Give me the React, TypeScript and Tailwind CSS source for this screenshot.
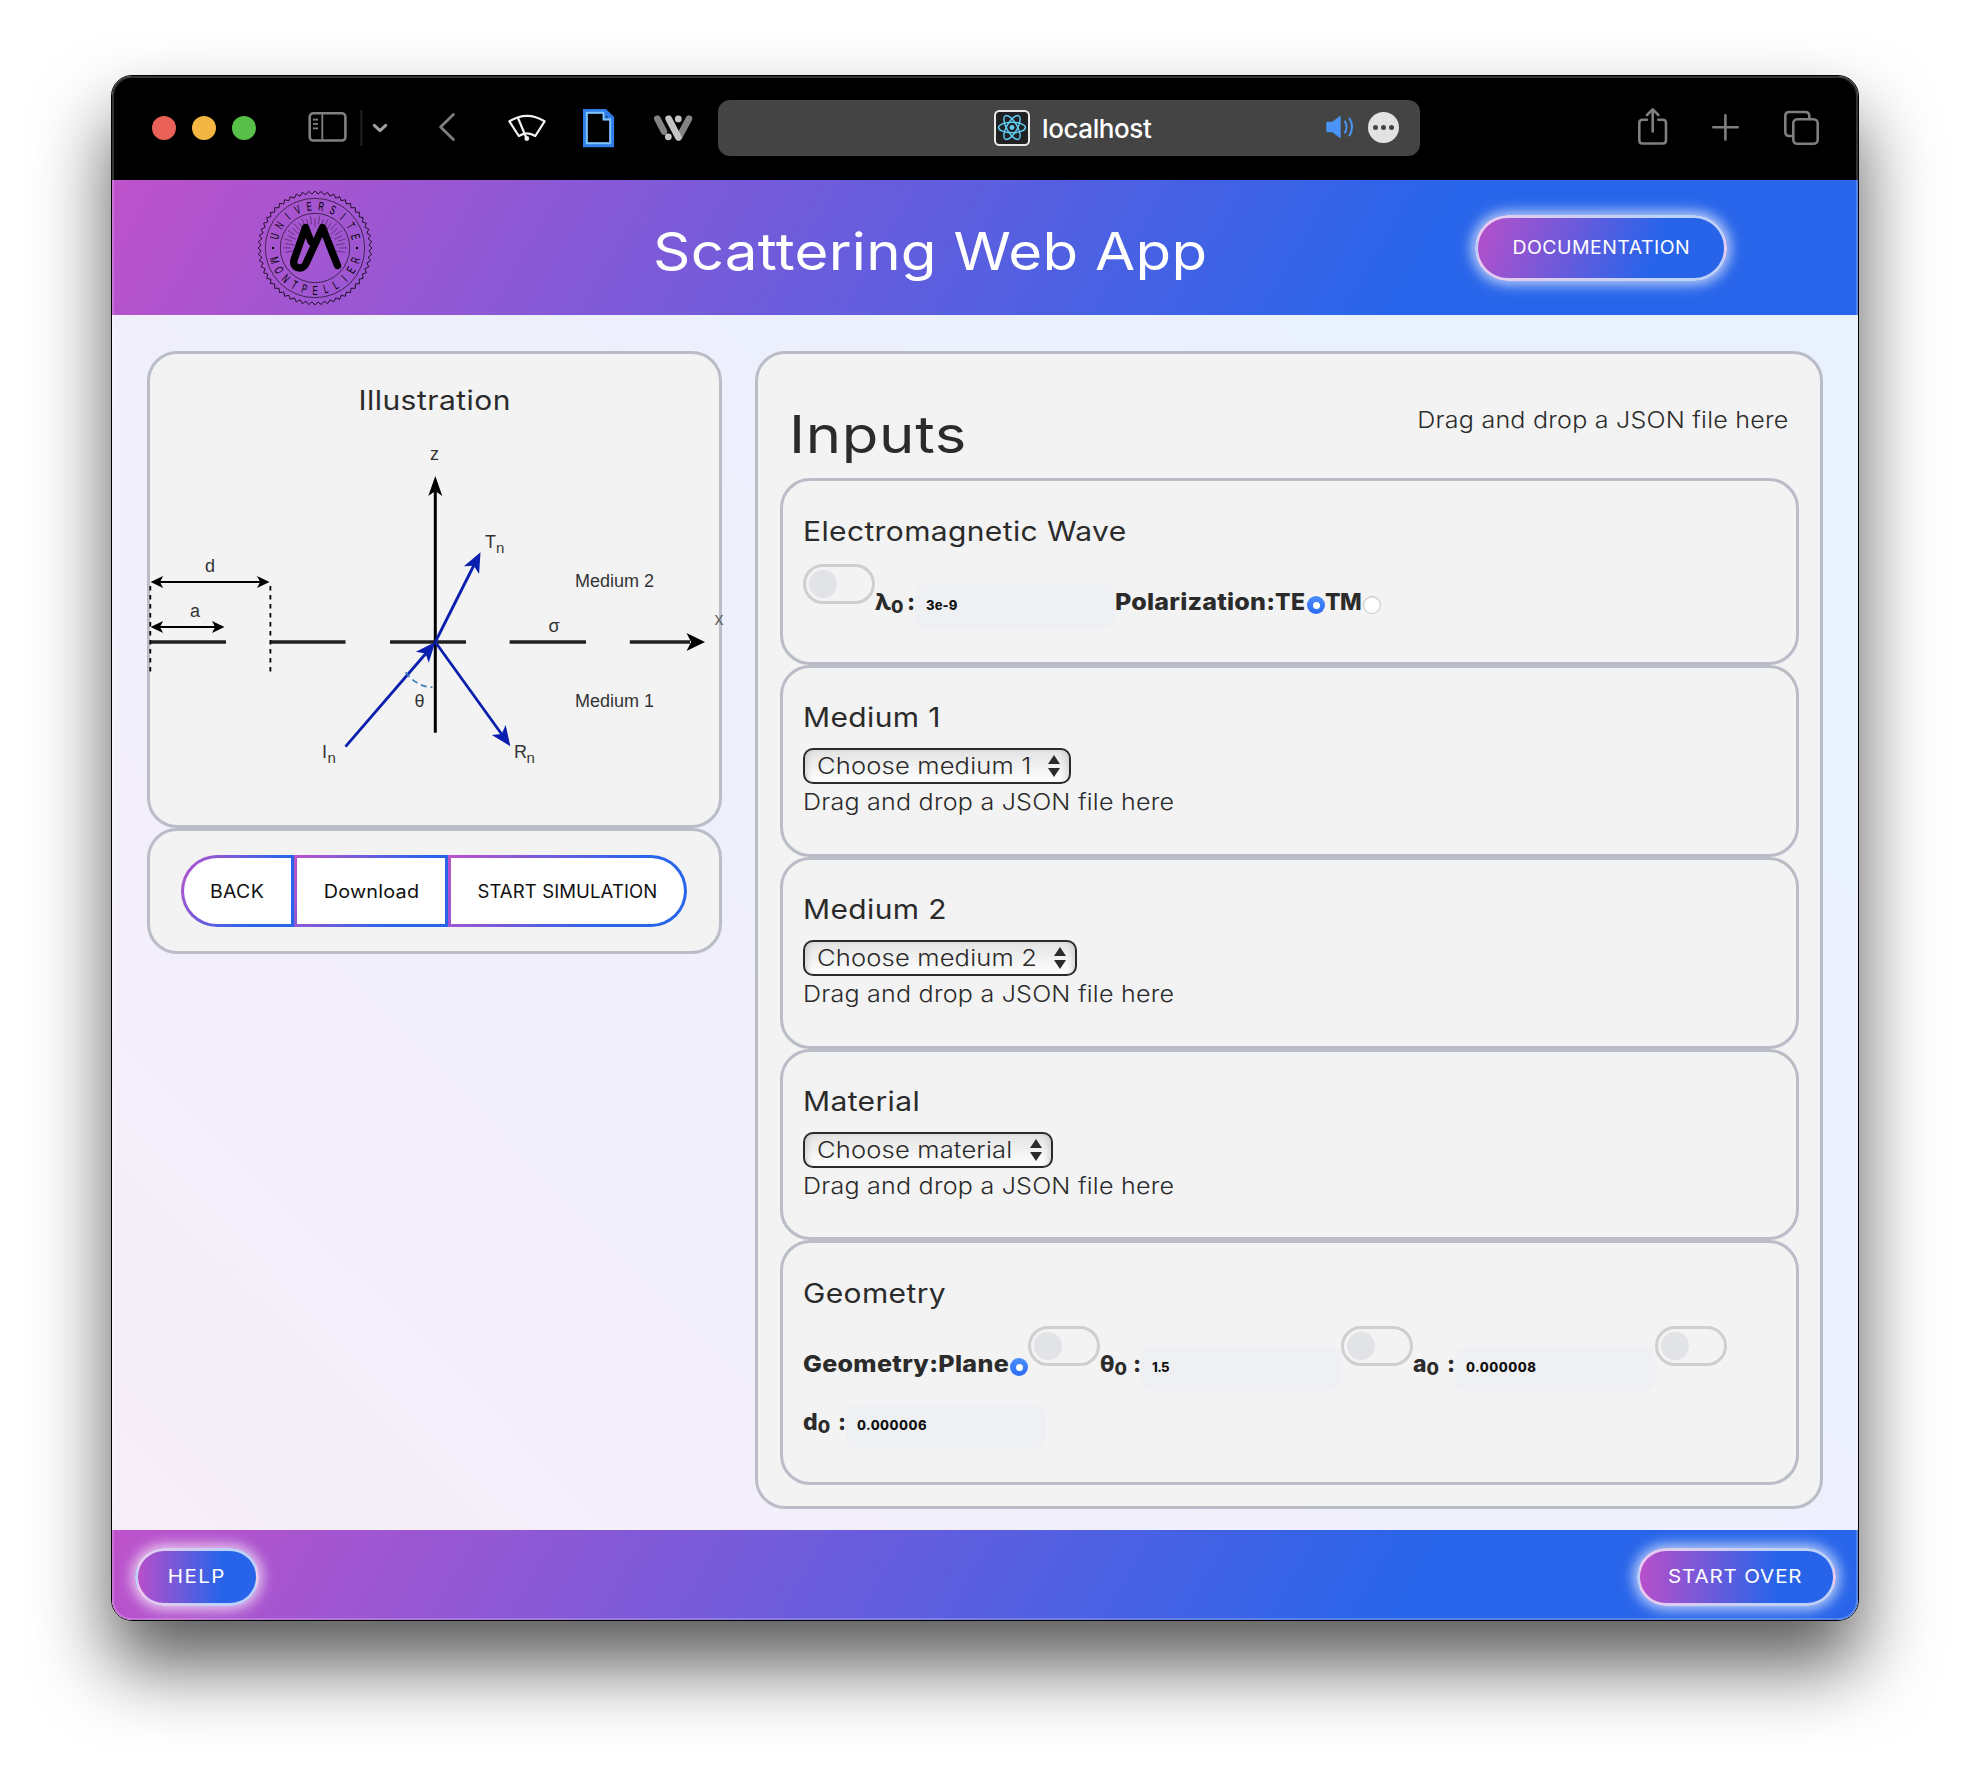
import type { ReactNode } from "react";

function Toggle() {
  return (
    <span className="flex h-[40px] w-[72px] shrink-0 items-center rounded-full border-[3px] border-[#cfcfcf] pl-[3px]">
      <span className="size-[28px] rounded-full bg-[#e2e3e7]" />
    </span>
  );
}

function Radio({ on }: { on?: boolean }) {
  return on ? (
    <span className="mt-[32px] flex size-[18px] shrink-0 items-center justify-center rounded-full bg-gradient-to-b from-[#4b8dfb] to-[#2c6bf5]">
      <span className="size-[7px] rounded-full bg-white" />
    </span>
  ) : (
    <span className="mt-[32px] size-[18px] shrink-0 rounded-full border border-[#c9c9c9] bg-white shadow-[inset_0_1px_1px_rgba(0,0,0,0.12)]" />
  );
}

function Field({ value, track }: { value: string; track: string }) {
  return (
    <span className={`mt-[20px] h-[45px] w-[200px] shrink-0 rounded-[12px] bg-[#eff0f3] pl-[11px] text-[13px] leading-[42px] font-extrabold text-[#111] ${track}`}>
      {value}
    </span>
  );
}

function Sym({ s, w }: { s: string; w: string }) {
  return (
    <span className={`flex shrink-0 pt-[16px] text-[23px] leading-[45px] font-extrabold ${w}`}>
      {s}
      <span className="pt-[4px] text-[18px]">0</span>
      <span className="ml-auto">:</span>
    </span>
  );
}

function Card({ title, className, children }: { title: string; className: string; children: ReactNode }) {
  return (
    <section className={`rounded-[30px] border-[3px] border-[#babdc8] bg-[#f3f3f3] pl-[20px] ${className}`}>
      <h2 className="text-[27px] leading-[34px]">
        <span className="inline-block origin-left scale-x-[1.11] tracking-[0.35px]">{title}</span>
      </h2>
      {children}
    </section>
  );
}

function Choice({ label, width }: { label: string; width: string }) {
  return (
    <>
      <div className={`mt-[13px] flex h-[36px] items-center justify-between rounded-[10px] border-2 border-[#2b2b2b] bg-gradient-to-b from-[#e3e3e3] to-white pr-[9px] pl-[12px] text-[23px] font-light shadow-[inset_6px_0_6px_-4px_rgba(0,0,0,0.14),inset_-6px_0_6px_-4px_rgba(0,0,0,0.14)] ${width}`}>
        <span className="inline-block origin-left scale-x-[1.11] tracking-[0.15px]">{label}</span>
        <svg width="12" height="22" viewBox="0 0 12 22" fill="#2b2b2b">
          <path d="M6 0 12 9H0zM6 22 0 13h12z" />
        </svg>
      </div>
      <p className="pt-px text-[23px] leading-[35px] font-light">
        <span className="inline-block origin-left scale-x-[1.09] tracking-[0.2px]">Drag and drop a JSON file here</span>
      </p>
    </>
  );
}

function polar(r: number, deg: number) {
  const a = (deg * Math.PI) / 180;
  return [r * Math.cos(a), r * Math.sin(a)];
}

function Seal() {
  const top = "UNIVERSITE".split("");
  const bottom = "MONTPELLIER".split("");
  const teeth = 56;
  const edge = Array.from({ length: teeth * 2 }, (_, i) => polar(i % 2 ? 54 : 57, (i * 180) / teeth).map((n) => n.toFixed(2)).join(",")).join(" ");
  return (
    <svg className="size-[116px]" viewBox="-58 -58 116 116" fill="none" stroke="#000">
      <polygon points={edge} strokeWidth="0.8" strokeLinejoin="round" />
      <circle r="49.7" strokeWidth="0.6" />
      <circle r="34.7" strokeWidth="0.6" />
      {Array.from({ length: 25 }, (_, i) => {
        const d = 172 + i * 8.17;
        const [x1, y1] = polar(i % 2 ? 24 : 21, d);
        const [x2, y2] = polar(i % 2 ? 32 : 30, d);
        return <line key={i} x1={x1} y1={y1} x2={x2} y2={y2} strokeWidth="0.4" />;
      })}
      <g fill="#000" stroke="none" fontFamily="Liberation Sans" fontSize="12.5" textAnchor="middle">
        {top.map((c, i) => (
          <text key={i} transform={`rotate(${-74 + i * 16.5}) translate(0 -37.8) scale(0.62 1)`}>{c}</text>
        ))}
        {bottom.map((c, i) => (
          <text key={i} transform={`rotate(${73 - i * 14.6}) translate(0 46.5) scale(0.62 1)`}>{c}</text>
        ))}
        <circle cx="-42" cy="0" r="1.2" />
        <circle cx="42" cy="0" r="1.2" />
      </g>
      <path d="M-3.8-6-9.5-20.5-21 12C-23.5 20-12 23.5-9 15.5L7.5-20.5 22.5 17.5" strokeWidth="7.4" strokeLinecap="round" strokeLinejoin="round" />
    </svg>
  );
}

type HeadProps = { x: number; y: number; deg: number; len?: number; half?: number; color?: string };

function Head({ x, y, deg, len = 18, half = 8, color = "#000" }: HeadProps) {
  return <path transform={`translate(${x} ${y}) rotate(${deg})`} d={`M0 0L${-len} ${-half}L${-len * 0.75} 0L${-len} ${half}Z`} fill={color} stroke="none" />;
}

function Diagram() {
  const blue = "#0b1fae";
  return (
    <svg className="h-[408px] w-[569px] overflow-visible" viewBox="150 417 569 408" fill="none">
      <path d="M150 642h76M270 642h75.5M390 642h76M509.6 642h76.4M629.8 642H690" stroke="#222" strokeWidth="3.6" />
      <path d="M435.3 488V732.7" stroke="#000" strokeWidth="3" />
      <Head x={435.3} y={476} deg={-90} len={20} half={7} />
      <Head x={705} y={642} deg={0} len={18.5} half={9} />
      <g stroke="#000" strokeWidth="1.8">
        <path d="M160 582h100M160 627h56" />
        <path d="M150.3 586V673M270.4 586V673" strokeDasharray="4.5 4.5" />
      </g>
      <Head x={150.6} y={582} deg={180} len={12.5} half={6} />
      <Head x={269.5} y={582} deg={0} len={12.5} half={6} />
      <Head x={150.6} y={627} deg={180} len={12.5} half={6} />
      <Head x={224.5} y={627} deg={0} len={12.5} half={6} />
      <path d="M345.5 746.7 428 651M435.3 642 474 565M435.3 642 503 736" stroke={blue} strokeWidth="2.8" />
      <Head x={480.5} y={552.3} deg={-63.3} len={20} half={8.5} color={blue} />
      <Head x={435.3} y={642} deg={-49.4} len={20} half={8.5} color={blue} />
      <Head x={510.4} y={746.3} deg={54.3} len={20} half={8.5} color={blue} />
      <path d="M405.6 672.3Q416 686.5 432.5 687.3" stroke="#3f7cb8" strokeWidth="1.8" strokeDasharray="6 4" />
      <g fill="#333" fontFamily="Liberation Sans" fontSize="18">
        <text x="430" y="459.5">z</text>
        <text x="205" y="572">d</text>
        <text x="190" y="617">a</text>
        <text x="485" y="548">T</text>
        <text x="496" y="552.5" fontSize="15">n</text>
        <text x="575" y="587">Medium 2</text>
        <text x="575" y="707">Medium 1</text>
        <text x="548.5" y="632">σ</text>
        <text x="414.4" y="707">θ</text>
        <text x="714.5" y="624.5" fill="#666">x</text>
        <text x="322" y="758">I</text>
        <text x="327.5" y="762.7" fontSize="15">n</text>
        <text x="514" y="758">R</text>
        <text x="526.5" y="762.7" fontSize="15">n</text>
      </g>
    </svg>
  );
}

function Toolbar() {
  return (
    <div className="flex h-[104px] items-center bg-black">
      <div className="ml-[40px] flex gap-[16px]">
        <span className="size-[24px] rounded-full bg-[#ea6157]" />
        <span className="size-[24px] rounded-full bg-[#f3b643]" />
        <span className="size-[24px] rounded-full bg-[#58bf49]" />
      </div>
      <svg className="ml-[52px] h-[40px] w-[80px]" viewBox="308 108 80 40" fill="none" stroke="#808080" strokeWidth="2.6">
        <rect x="309.7" y="113.3" width="35.7" height="27.2" rx="3.5" />
        <path d="M322.3 113v28M313 119.7h5M313 123.9h5M313 128.3h5" strokeWidth="1.8" />
        <path d="M361.3 110v36" stroke="#1f1f1f" strokeWidth="2" />
        <path d="M374.3 125.3 380 130.6 385.7 125.3" stroke="#a2a2a2" strokeWidth="3" strokeLinecap="round" strokeLinejoin="round" />
      </svg>
      <svg className="ml-[50px] h-[40px] w-[20px]" viewBox="438 108 20 40" fill="none" stroke="#7d7d7d" strokeWidth="2.8" strokeLinecap="round" strokeLinejoin="round">
        <path d="M453.4 114.4 440.6 127 453.4 139.6" />
      </svg>
      <svg className="ml-[50px] h-[40px] w-[38px]" viewBox="508 108 38 40" fill="none" stroke="#f2f2f2" strokeWidth="2.2" strokeLinejoin="round" strokeLinecap="round">
        <path d="M509.4 121.3Q527 110.5 544.6 121.3L535.3 136Q527 130.6 518.8 136ZM518 118 526.6 138.5" />
        <circle cx="526.8" cy="138.5" r="1.3" fill="#f2f2f2" />
      </svg>
      <svg className="ml-[36px] h-[40px] w-[34px]" viewBox="582 108 34 40" fill="none">
        <path d="M585.3 111.2H605L611.8 118V144.9H585.3Z" stroke="#2f7de6" strokeWidth="4.6" />
        <path d="M604.5 110.5V118.8H612.5" stroke="#2f7de6" strokeWidth="3" />
        <path d="M586.8 112.8H603.5V119.5H610.2V143.3H586.8Z" stroke="#82c4fc" strokeWidth="1.9" />
      </svg>
      <svg className="ml-[38px] h-[40px] w-[40px]" viewBox="654 108 40 40" fill="none" strokeLinecap="round" strokeWidth="6.6">
        <path d="M657.3 118.6 664 131.5" stroke="#838383" />
        <path d="M689 118.6 679 137.2" stroke="#838383" />
        <path d="M668.6 118.6 678.3 137.2" stroke="#c4c4c4" />
        <circle cx="678.3" cy="118.9" r="3.4" fill="#c4c4c4" />
        <circle cx="668.3" cy="136.8" r="3.4" fill="#c4c4c4" />
      </svg>
      <div className="ml-[24px] flex h-[56px] w-[702px] items-center rounded-[12px] bg-[#444]">
        <svg className="ml-[276px] size-[36px] shrink-0" viewBox="0 0 36 36" fill="none" stroke="#63cdf5" strokeWidth="1.4">
          <rect x="1" y="1" width="34" height="34" rx="4.5" fill="#1f2123" stroke="#e8e8e8" strokeWidth="2" />
          <ellipse cx="18" cy="17.5" rx="13.5" ry="5.2" />
          <ellipse cx="18" cy="17.5" rx="13.5" ry="5.2" transform="rotate(60 18 17.5)" />
          <ellipse cx="18" cy="17.5" rx="13.5" ry="5.2" transform="rotate(120 18 17.5)" />
          <circle cx="18" cy="17.5" r="2.4" fill="#63cdf5" stroke="none" />
        </svg>
        <span className="ml-[12px] text-[26px] font-medium tracking-[-0.4px] text-white">localhost</span>
        <svg className="mr-[14px] mb-[2px] ml-auto h-[24px] w-[28px]" viewBox="1325 115 28 24" fill="none" stroke="#4a94f7" strokeWidth="2" strokeLinecap="round">
          <path d="M1326 122.5H1331.5L1339 116.8V137.2L1331.5 131.5H1326Z" fill="#4a94f7" strokeLinejoin="round" strokeWidth="1.4" />
          <path d="M1344 121.5Q1347 127 1344 132.5M1348.5 118.5Q1353.5 127 1348.5 135.5" />
        </svg>
        <span className="mr-[21px] mb-[2px] flex size-[31px] items-center justify-center gap-[3px] rounded-full bg-[#e2e2e2]">
          <span className="size-[5px] rounded-full bg-[#444]" />
          <span className="size-[5px] rounded-full bg-[#444]" />
          <span className="size-[5px] rounded-full bg-[#444]" />
        </span>
      </div>
      <svg className="mr-[37px] ml-auto h-[42px] w-[184px]" viewBox="1637 106 184 42" fill="none" stroke="#7f7f7f" strokeWidth="2.6" strokeLinecap="round" strokeLinejoin="round">
        <path d="M1647 118.8H1642.5Q1639.3 118.8 1639.3 122V139.3Q1639.3 142.5 1642.5 142.5H1662.8Q1666 142.5 1666 139.3V122Q1666 118.8 1662.8 118.8H1658.3M1652.7 130.5V108.5M1647 114 1652.7 108.3 1658.4 114" />
        <path d="M1713.3 126.3H1737.7M1725.4 114.2V138.6" />
        <rect x="1793.3" y="118.3" width="24.4" height="24.4" rx="4" />
        <path d="M1793 135H1789.3Q1785.3 135 1785.3 131V115Q1785.3 111 1789.3 111H1805.3Q1809.3 111 1809.3 115V118" />
      </svg>
    </div>
  );
}

const glow =
  "flex items-center justify-center rounded-full border-[3px] border-white/70 text-white shadow-[0_0_14px_3px_rgba(255,255,255,0.75)]";
const band = "bg-[linear-gradient(120deg,#be52cb,#2865ea_74%)]";
const outline =
  "h-[72px] border-[3px] border-transparent [background:linear-gradient(#fff,#fff)_padding-box,linear-gradient(120deg,#be52cb,#2865ea_70%)_border-box]";
const panel = "rounded-[30px] border-[3px] border-[#babdc8] bg-[#f3f3f3]";
const bold = "pt-[16px] leading-[45px]";

export default function App() {
  return (
    <div className="h-[1768px] w-[1970px] bg-white pt-[75px] pl-[111px] font-['Inter',sans-serif] text-[#2b2b2b]">
      <div className="relative h-[1546px] w-[1748px] rounded-[21px] border border-black shadow-[0_44px_76px_rgba(0,0,0,0.65)]">
        <div className="flex h-full flex-col overflow-hidden rounded-[20px]">
          <Toolbar />
          <header className={`flex h-[135px] items-center ${band}`}>
            <div className="ml-[145px]">
              <Seal />
            </div>
            <h1 className="ml-[280px] pt-[9px] text-[52px] leading-[60px] whitespace-nowrap text-white">
              <span className="inline-block origin-left scale-x-[1.12] tracking-[0.25px]">Scattering Web App</span>
            </h1>
            <button className={`${glow} mr-[131px] ml-auto h-[66px] w-[252px] bg-[linear-gradient(110deg,#b84fca,#2864ea_70%)] text-[18px]`}>
              <span className="inline-block scale-x-[1.08] tracking-[0.45px]">DOCUMENTATION</span>
            </button>
          </header>
          <main className="flex h-[1215px] items-start gap-[33px] bg-[linear-gradient(45deg,#f6eef9,#e9f1fe_85%)] pt-[36px] pl-[35px]">
            <div className="w-[575px]">
              <section className={`h-[477px] pt-[30px] ${panel}`}>
                <h2 className="-mb-px text-center text-[27px] leading-[34px]">
                  <span className="inline-block scale-x-[1.11] tracking-[0.42px]">Illustration</span>
                </h2>
                <Diagram />
              </section>
              <section className={`flex h-[126px] pt-[24px] pl-[31px] text-[18px] text-[#111] ${panel}`}>
                <button className={`w-[113px] rounded-l-full ${outline}`}>
                  <span className="inline-block scale-x-[1.08] tracking-[0.3px]">BACK</span>
                </button>
                <button className={`w-[154px] ${outline}`}>
                  <span className="inline-block scale-x-[1.1] tracking-[0.2px]">Download</span>
                </button>
                <button className={`w-[239px] rounded-r-full ${outline}`}>
                  <span className="inline-block scale-x-[1.03] tracking-[0.1px]">START SIMULATION</span>
                </button>
              </section>
            </div>
            <div className={`h-[1158px] w-[1068px] pr-[21px] pl-[22px] ${panel}`}>
              <div className="flex h-[124px] items-start justify-between pr-[10px] pl-[9px]">
                <h1 className="mt-[51px] text-[52px] leading-[60px]">
                  <span className="inline-block origin-left scale-x-[1.15] tracking-[0.6px]">Inputs</span>
                </h1>
                <p className="mt-[51px] text-[23px] leading-[30px] font-light">
                  <span className="inline-block origin-right scale-x-[1.09] tracking-[0.2px]">Drag and drop a JSON file here</span>
                </p>
              </div>
              <Card title="Electromagnetic Wave" className="h-[187px] pt-[34px]">
                <div className="mt-[15px] flex items-start">
                  <Toggle />
                  <Sym s="λ" w="w-[40px]" />
                  <Field value="3e-9" track="tracking-[0.1px]" />
                  <span className="flex items-start text-[23px] font-extrabold">
                    <span className={`w-[160px] ${bold}`}>
                      <span className="inline-block origin-left scale-x-[1.09] tracking-[0.2px]">Polarization:</span>
                    </span>
                    <span className={`w-[32px] tracking-[0.4px] ${bold}`}>TE</span>
                    <Radio on />
                    <span className={`w-[38px] tracking-[-0.5px] ${bold}`}>TM</span>
                    <Radio />
                  </span>
                </div>
              </Card>
              <Card title="Medium 1" className="h-[192px] pt-[33px]">
                <Choice label="Choose medium 1" width="w-[268px]" />
              </Card>
              <Card title="Medium 2" className="h-[192px] pt-[33px]">
                <Choice label="Choose medium 2" width="w-[274px]" />
              </Card>
              <Card title="Material" className="h-[191px] pt-[33px]">
                <Choice label="Choose material" width="w-[250px]" />
              </Card>
              <Card title="Geometry" className="h-[245px] pt-[34px]">
                <div className="mt-[15px] flex items-start">
                  <span className={`w-[207px] text-[23px] font-extrabold ${bold}`}>
                    <span className="inline-block origin-left scale-x-[1.09] tracking-[0.28px]">Geometry:Plane</span>
                  </span>
                  <Radio on />
                  <Toggle />
                  <Sym s="θ" w="w-[41px]" />
                  <Field value="1.5" track="tracking-[-0.6px]" />
                  <Toggle />
                  <Sym s="a" w="w-[42px]" />
                  <Field value="0.000008" track="tracking-[0.5px]" />
                  <Toggle />
                </div>
                <div className="-mt-[7px] flex items-start">
                  <Sym s="d" w="w-[43px]" />
                  <Field value="0.000006" track="tracking-[0.45px]" />
                </div>
              </Card>
            </div>
          </main>
          <footer className={`flex h-[90px] items-start justify-between pt-[18px] pr-[22px] pl-[23px] ${band}`}>
            <button className={`${glow} h-[58px] w-[124px] bg-[linear-gradient(90deg,#b84fca,#2864ea_70%)] text-[19px]`}>
              <span className="inline-block scale-x-[1.08] tracking-[1.3px]">HELP</span>
            </button>
            <button className={`${glow} h-[58px] w-[199px] bg-[linear-gradient(90deg,#b84fca,#2864ea_70%)] pr-[2px] text-[19px]`}>
              <span className="inline-block scale-x-[1.08] tracking-[0.8px]">START OVER</span>
            </button>
          </footer>
        </div>
        <div className="pointer-events-none absolute inset-0 rounded-[20px] shadow-[inset_0_0_0_2px_rgba(255,255,255,0.2)]" />
      </div>
    </div>
  );
}
